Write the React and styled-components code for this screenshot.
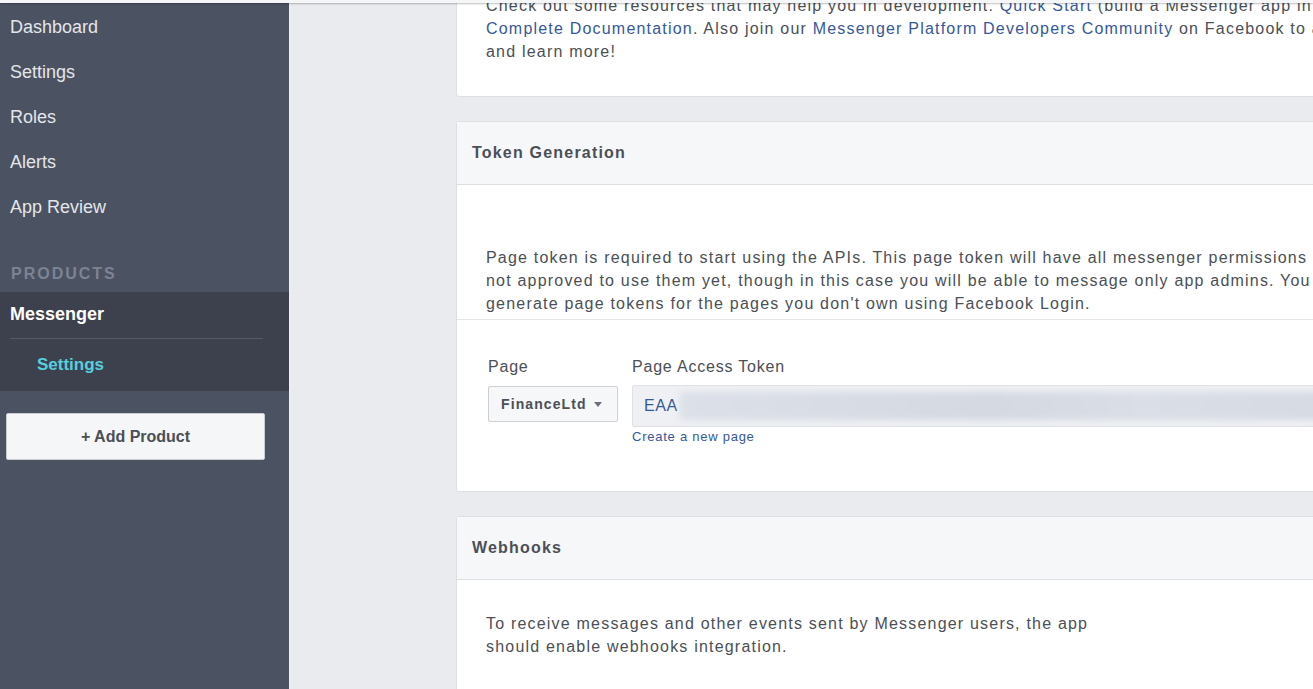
import React from 'react';
import styled, { createGlobalStyle } from 'styled-components';

const GlobalStyle = createGlobalStyle`
  html, body {
    margin: 0;
    padding: 0;
    height: 689px;
    overflow: hidden;
    background: #e9ebee;
  }
  body {
    font-family: "Liberation Sans", Arial, Helvetica, sans-serif;
    color: #4b4f56;
  }
`;

const Page = styled.div`
  display: flex;
  flex-direction: column;
  height: 689px;
  overflow: hidden;
`;

const TopEdge = styled.div`
  height: 3px;
  background: #f5f6f7;
  box-shadow: 0 1px 2px rgba(0, 0, 0, 0.25);
  position: relative;
  z-index: 2;
  flex-shrink: 0;
`;

const Body = styled.div`
  display: flex;
  flex: 1;
  min-height: 0;
`;

const Sidebar = styled.nav`
  width: 289px;
  flex-shrink: 0;
  background: #4b5262;
  padding-top: 2px;
  border-right: 2px solid #eceef1;
`;

const NavItem = styled.div`
  height: 45px;
  line-height: 45px;
  padding-left: 10px;
  font-size: 18px;
  color: #e4e6ea;
`;

const SectionLabel = styled.div`
  padding: 34px 0 8px 11px;
  line-height: 20px;
  font-size: 16px;
  font-weight: bold;
  letter-spacing: 2px;
  color: #7d8392;
`;

const ProductBlock = styled.div`
  background: #3c414d;
`;

const ProductName = styled.div`
  height: 46px;
  line-height: 44px;
  padding-left: 10px;
  font-size: 18px;
  font-weight: bold;
  color: #ffffff;
`;

const Divider = styled.div`
  height: 1px;
  margin: 0 26px 0 10px;
  background: #545a67;
`;

const SubItem = styled.div`
  height: 52px;
  line-height: 52px;
  padding-left: 37px;
  font-size: 17px;
  font-weight: bold;
  color: #56cfdf;
`;

const AddButton = styled.button`
  display: block;
  width: 259px;
  height: 47px;
  margin: 22px 0 0 6px;
  background: #f5f6f7;
  border: 1px solid #c9ccd2;
  border-radius: 2px;
  font-family: inherit;
  font-size: 16px;
  font-weight: bold;
  color: #4b4f56;
`;

const Main = styled.main`
  flex: 1;
  min-width: 0;
  overflow: hidden;
  padding-left: 165px;
  background: #e9ebee;
`;

const Card = styled.section`
  width: 1000px;
  margin-top: ${p => p.$top || '24px'};
  background: #fff;
  border: 1px solid #dddfe2;
  border-radius: 3px;
`;

const CardHeader = styled.div`
  height: 62px;
  line-height: 62px;
  padding-left: 15px;
  background: #f6f7f9;
  border-bottom: 1px solid #dddfe2;
  font-size: 16px;
  font-weight: bold;
  letter-spacing: 1.2px;
  color: #4b4f56;
`;

const CardSection = styled.div`
  padding: ${p => p.$pad};
  border-top: ${p => (p.$divided ? '1px solid #e5e6e9' : 'none')};
`;

const Text = styled.p`
  margin: 0;
  font-size: 16px;
  line-height: 23px;
  letter-spacing: 1.2px;
  white-space: nowrap;
  color: #4b4f56;
`;

const Link = styled.a`
  color: #365899;
  text-decoration: none;
`;

const FormRow = styled.div`
  display: grid;
  grid-template-columns: 144px 1fr;
  row-gap: 8px;
`;

const FieldLabel = styled.div`
  font-size: 16px;
  line-height: 20px;
  letter-spacing: 0.8px;
  color: #4b4f56;
`;

const Select = styled.button`
  display: flex;
  align-items: center;
  gap: 7px;
  width: 130px;
  height: 36px;
  margin-top: 1px;
  padding: 0 0 0 12px;
  background: #f6f7f9;
  border: 1px solid #ced0d4;
  border-radius: 2px;
  font-family: inherit;
  font-size: 14px;
  font-weight: bold;
  letter-spacing: 1.1px;
  color: #4b4f56;
`;

const Caret = styled.span`
  width: 0;
  height: 0;
  border-left: 4.5px solid transparent;
  border-right: 4.5px solid transparent;
  border-top: 5px solid #6b707a;
`;

const TokenField = styled.div`
  display: flex;
  align-items: center;
  height: 40px;
  padding-left: 11px;
  background: #eef0f3;
  border: 1px solid #dfe1e5;
  border-radius: 2px;
  overflow: hidden;
  font-size: 16px;
  letter-spacing: 0.6px;
  color: #365899;
`;

const Blurred = styled.div`
  flex: 1;
  height: 28px;
  margin-left: 2px;
  background: linear-gradient(90deg, #dce0e8 0%, #d4d9e2 40%, #dadee6 60%, #d3d8e2 100%);
  filter: blur(3px);
`;

const SmallLink = styled.a`
  display: block;
  margin-top: 2px;
  font-size: 13px;
  line-height: 16px;
  letter-spacing: 0.75px;
  color: #365899;
  text-decoration: none;
`;

const sideItems = ['Dashboard', 'Settings', 'Roles', 'Alerts', 'App Review'];

export default function App() {
  return (
    <Page>
      <GlobalStyle />
      <TopEdge />
      <Body>
        <Sidebar>
          {sideItems.map(item => (
            <NavItem key={item}>{item}</NavItem>
          ))}
          <SectionLabel>PRODUCTS</SectionLabel>
          <ProductBlock>
            <ProductName>Messenger</ProductName>
            <Divider />
            <SubItem>Settings</SubItem>
          </ProductBlock>
          <AddButton>+ Add Product</AddButton>
        </Sidebar>

        <Main>
          <Card $top="-30px">
            <CardSection $pad="20px 30px 33px 29px">
              <Text>
                Check out some resources that may help you in development.{' '}
                <Link href="#">Quick Start</Link> (build a Messenger app in 10 minutes) and
                <br />
                <Link href="#">Complete Documentation</Link>. Also join our{' '}
                <Link href="#">Messenger Platform Developers Community</Link> on Facebook to ask questions
                <br />
                and learn more!
              </Text>
            </CardSection>
          </Card>

          <Card>
            <CardHeader>Token Generation</CardHeader>
            <CardSection $pad="61px 30px 4px 29px">
              <Text>
                Page token is required to start using the APIs. This page token will have all messenger permissions even if your app is
                <br />
                not approved to use them yet, though in this case you will be able to message only app admins. You can also
                <br />
                generate page tokens for the pages you don't own using Facebook Login.
              </Text>
            </CardSection>
            <CardSection $divided $pad="37px 0 46px 31px">
              <FormRow>
                <FieldLabel>Page</FieldLabel>
                <FieldLabel>Page Access Token</FieldLabel>
                <div>
                  <Select>
                    FinanceLtd
                    <Caret />
                  </Select>
                </div>
                <div>
                  <TokenField>
                    EAA
                    <Blurred />
                  </TokenField>
                  <SmallLink href="#">Create a new page</SmallLink>
                </div>
              </FormRow>
            </CardSection>
          </Card>

          <Card>
            <CardHeader>Webhooks</CardHeader>
            <CardSection $pad="32px 30px 40px 29px">
              <Text>
                To receive messages and other events sent by Messenger users, the app
                <br />
                should enable webhooks integration.
              </Text>
            </CardSection>
          </Card>
        </Main>
      </Body>
    </Page>
  );
}
